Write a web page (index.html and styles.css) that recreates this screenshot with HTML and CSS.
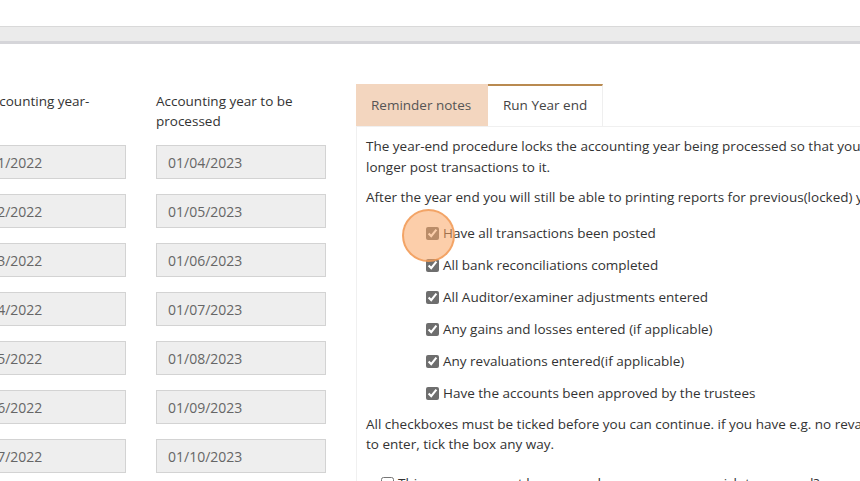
FILE: index.html
```html
<!DOCTYPE html>
<html lang="en">
<head>
<meta charset="utf-8">
<title>Year end</title>
<link rel="stylesheet" href="styles.css">
</head>
<body>
<header class="topbar"></header>
<main class="main">
  <section class="dates">
    <div class="col">
      <div class="col-label">Last accounting year-<br>end</div>
      <input class="date" type="text" value="01/01/2022" readonly>
      <input class="date" type="text" value="01/02/2022" readonly>
      <input class="date" type="text" value="01/03/2022" readonly>
      <input class="date" type="text" value="01/04/2022" readonly>
      <input class="date" type="text" value="01/05/2022" readonly>
      <input class="date" type="text" value="01/06/2022" readonly>
      <input class="date" type="text" value="01/07/2022" readonly>
    </div>
    <div class="col">
      <div class="col-label">Accounting year to be processed</div>
      <input class="date" type="text" value="01/04/2023" readonly>
      <input class="date" type="text" value="01/05/2023" readonly>
      <input class="date" type="text" value="01/06/2023" readonly>
      <input class="date" type="text" value="01/07/2023" readonly>
      <input class="date" type="text" value="01/08/2023" readonly>
      <input class="date" type="text" value="01/09/2023" readonly>
      <input class="date" type="text" value="01/10/2023" readonly>
    </div>
  </section>
  <section class="panel">
    <nav class="tabs">
      <div class="tab tab-notes">Reminder notes</div>
      <div class="tab tab-active">Run Year end</div>
    </nav>
    <div class="tab-body">
      <p class="p1">The year-end procedure locks the accounting year being processed so that you can no longer post transactions to it.</p>
      <p class="p2">After the year end you will still be able to printing reports for previous(locked) years.</p>
      <ul class="checks">
        <li><label class="check"><span class="marker-wrap"><input type="checkbox" checked><span class="click-marker"></span></span>Have all transactions been posted</label></li>
        <li><label class="check"><input type="checkbox" checked>All bank reconciliations completed</label></li>
        <li><label class="check"><input type="checkbox" checked>All Auditor/examiner adjustments entered</label></li>
        <li><label class="check"><input type="checkbox" checked>Any gains and losses entered (if applicable)</label></li>
        <li><label class="check"><input type="checkbox" checked>Any revaluations entered(if applicable)</label></li>
        <li><label class="check"><input type="checkbox" checked>Have the accounts been approved by the trustees</label></li>
      </ul>
      <p class="p3">All checkboxes must be ticked before you can continue. if you have e.g. no revaluations to enter, tick the box any way.</p>
      <label class="check confirm"><input type="checkbox">This process cannot be reversed are you sure you wish to proceed?</label>
    </div>
  </section>
</main>
</body>
</html>
```

FILE: styles.css
```css
* { box-sizing: border-box; }

html, body {
  margin: 0;
  padding: 0;
  background: #ffffff;
  overflow: hidden;
  width: 860px;
  height: 481px;
}

body {
  font-family: "Open Sans", "Noto Sans", sans-serif;
  font-size: 13.5px;
  color: #333333;
}

.topbar {
  margin-top: 26px;
  height: 18px;
  background: #ebebeb;
  border-top: 1px solid #d9d9d9;
  border-bottom: 3px solid #d5d5d9;
}

.main {
  display: flex;
  align-items: flex-start;
  gap: 30px;
  padding-top: 40px;
  margin-left: -44px;
}

.dates {
  display: flex;
  gap: 30px;
  padding-top: 6px;
}

.col {
  width: 170px;
  display: flex;
  flex-direction: column;
  gap: 15px;
}

.col-label {
  line-height: 20px;
  height: 40px;
  padding-top: 1px;
  font-size: 13.5px;
  color: #333;
}

.date {
  display: block;
  width: 170px;
  height: 34px;
  margin: 0;
  padding: 0 11px;
  border: 1px solid #d3d3d3;
  background: #eeeeee;
  color: #666666;
  font-family: inherit;
  font-size: 14px;
  outline: none;
}

.panel {
  flex: 0 0 auto;
  width: 576px;
}

.tabs {
  display: flex;
}

.tab {
  height: 42px;
  line-height: 39px;
  padding: 0 15px;
  white-space: nowrap;
  color: #555;
}

.tab-notes {
  width: 132px;
  background: #f3d6bf;
  border-top: 2px solid #f3d6bf;
}

.tab-active {
  width: 115px;
  background: #fff;
  border-top: 2px solid #b98a50;
  border-right: 1px solid #efefef;
  color: #444;
}

.tab-body {
  border-top: 1px solid #f0f0f0;
  border-left: 1px solid #f0f0f0;
  padding: 9px 10px 0 9px;
  line-height: 21px;
}

.tab-body p {
  margin: 0;
}

.p1 { margin-bottom: 9px !important; }
.p2 { margin-bottom: 9px !important; }

.checks {
  list-style: none;
  margin: 0;
  padding: 0 0 0 60px;
}

.checks li {
  height: 32px;
  display: flex;
  align-items: center;
}

.check {
  display: flex;
  align-items: center;
  color: #333;
}

.check input {
  width: 13px;
  height: 13px;
  margin: 0 4px 0 0;
  accent-color: #6e6e6e;
}

.marker-wrap {
  position: relative;
  display: inline-flex;
  align-items: center;
}

.click-marker {
  position: absolute;
  left: -24px;
  top: -18px;
  width: 53px;
  height: 53px;
  border-radius: 50%;
  background: rgba(250, 165, 100, 0.55);
  border: 2px solid rgba(240, 150, 80, 0.75);
  pointer-events: none;
}

.p3 {
  margin-top: 5px !important;
  line-height: 20px;
}

.confirm {
  margin: 19px 0 0 15px;
}
```
